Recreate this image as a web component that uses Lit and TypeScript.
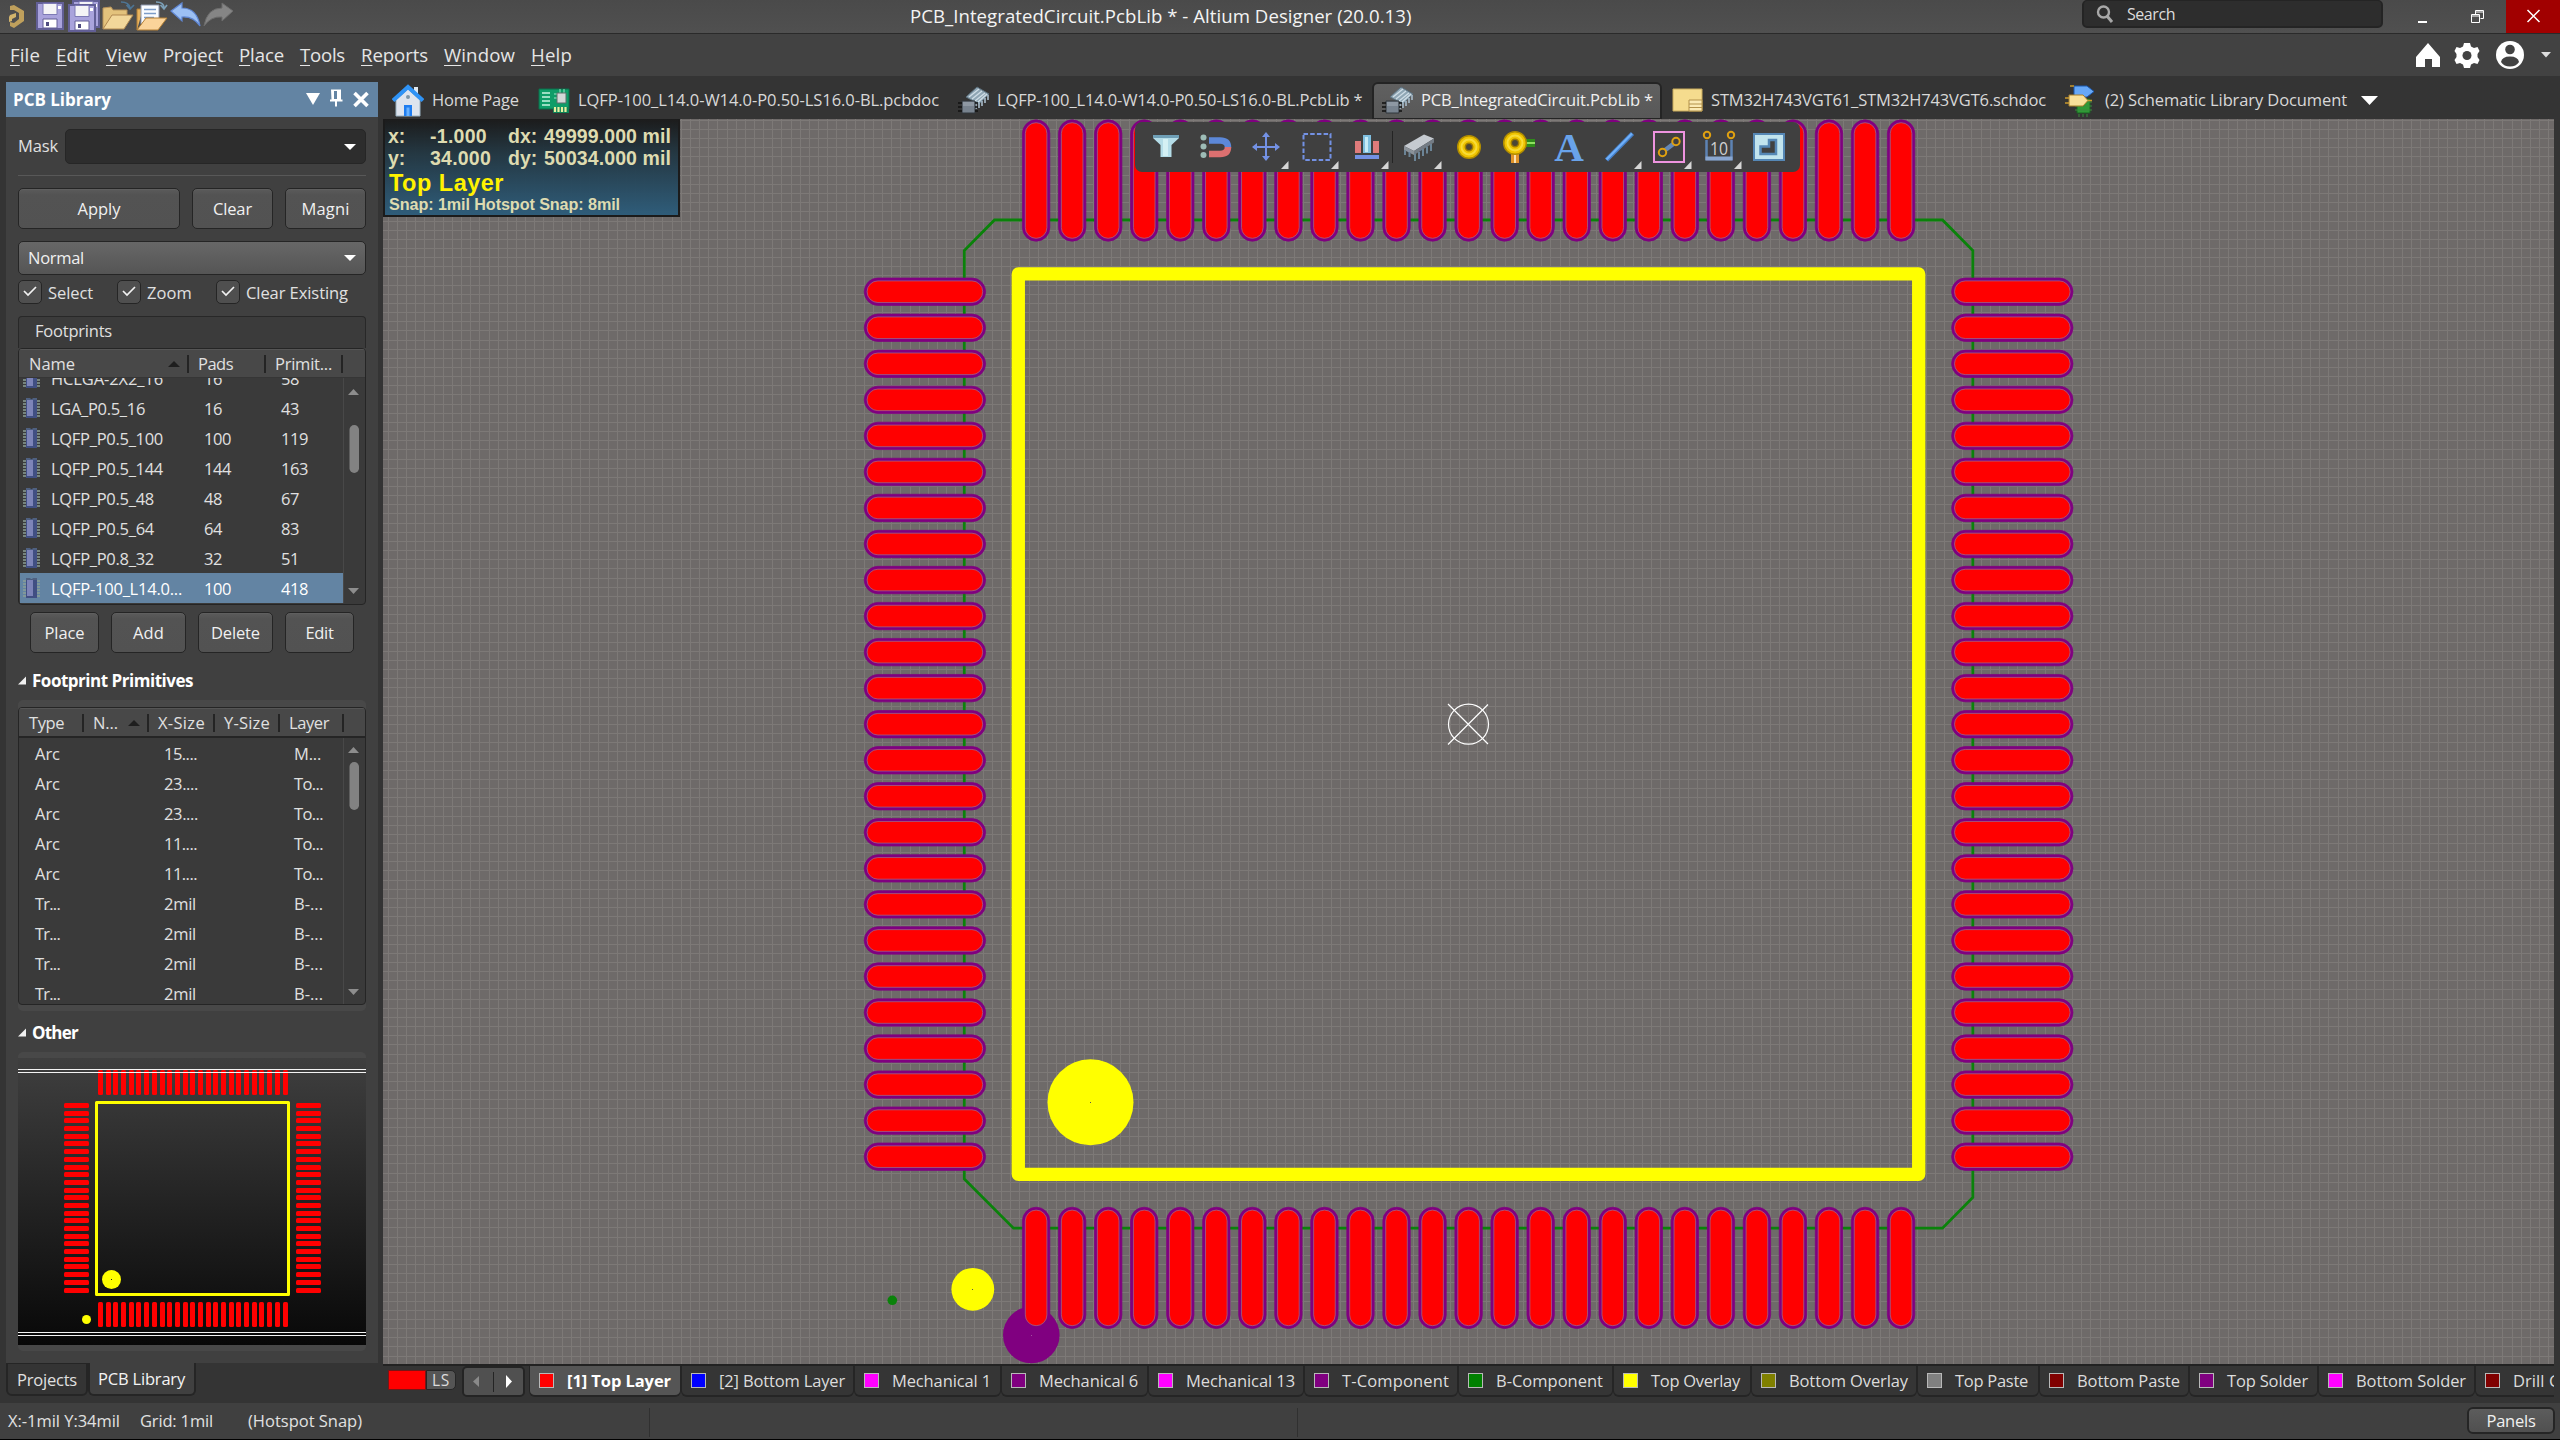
import { LitElement, html, svg, css, TemplateResult } from "lit";
import { customElement } from "lit/decorators.js";

/** A label whose tracking is tuned so that it spans the given width. */
const t = (text: string, w: number, cls = "") => html`<span class="t ${cls}" data-w=${w}>${text}</span>`;

const fitLabels = (root: ParentNode) => {
  root.querySelectorAll<HTMLElement>("[data-w]").forEach((el) => {
    el.style.letterSpacing = "0px";
    const n = (el.textContent ?? "").length;
    const want = Number(el.dataset.w);
    if (n > 1 && want) {
      const diff = (want - el.getBoundingClientRect().width) / n;
      el.style.letterSpacing = diff.toFixed(3) + "px";
    }
  });
};

const base = css`
  * { box-sizing: border-box; }
  .t { display: inline-block; white-space: pre; }
  svg { display: block; flex: none; }
`;

const N = 25;
const idx = Array.from({ length: N }, (_, i) => i);

/* ---------- title bar ---------- */
@customElement("title-bar")
class TitleBar extends LitElement {
  static styles = [base, css`
    :host { display: flex; height: 34px; background: linear-gradient(#4a4a4a, #505050); border-bottom: 1px solid #2a2a2a; color: #f4f4f4; }
    .quick { width: 910px; padding-left: 6px; }
    .title { font-size: 18.6px; line-height: 32px; flex: 1; }
    .search { width: 301px; height: 28px; margin-right: 0; background: #2d2d2d; border: 2px solid #242424; border-top-width: 1px; border-radius: 5px; display: flex; align-items: center; padding-left: 12px; gap: 13px; font-size: 16px; color: #dcdcdc; }
    .win { width: 123px; }
    .close { width: 54px; height: 33px; background: #a10000; }
  `];
  firstUpdated() { fitLabels(this.renderRoot); }
  render() {
    const floppy = (x: number, y: number) => svg`<g transform="translate(${x} ${y})">
      <path d="M1 1h26v26h-26z" fill="#a9a3dc" stroke="#625f96" stroke-width="2"/>
      <path d="M7 1.5h14v11h-14z" fill="#f4f4f6" stroke="#7d7ab5"/><path d="M22 4h3v3h-3z" fill="#fff"/>
      <path d="M7 17h14v9h-14z" fill="#fff" stroke="#625f96"/><path d="M10 20h3v4h-3z" fill="#4f4c80"/></g>`;
    return html`
      <div class="quick">
        <svg width="240" height="33" viewBox="6 0 240 33">
          <path d="M10 10V6l4-1 10 6v10l-10 7-4-2v-4l4 1 5-4v-6l-5-3z" fill="#bfa05c"/>
          <path d="M10 15l6-2v4l-4 2v2l-3 1v-5z" fill="#d2b46c"/>
          ${floppy(36, 2)}${floppy(72, 0)}${floppy(68, 4)}
          <path d="M103 29V8l8-1 2 3h14v6" fill="#e3c27c" stroke="#b8935a"/>
          <path d="M103 29l9-14h21l-9 14z" fill="#f2d79a" stroke="#b08850"/>
          <path d="M121 2q8 0 9 6M126.500 5l3.500 4 4-4" fill="none" stroke="#4d7595" stroke-width="1.700"/>
          <path d="M137 30V9h6" fill="#eab45e" stroke="#b37f34"/>
          <path d="M141 5h18v19h-18z" fill="#fafcff" stroke="#8d97ad"/>
          <path d="M144 9.500h12M144 13.500h12M144 17.500h10" stroke="#7c9cc8" stroke-width="1.300"/>
          <path d="M137 30l9-12h21l-9 12z" fill="#fbd49a" stroke="#b37f34"/>
          <path d="M156 2q8 0 8 6M160.500 5l3.500 4 3-4" fill="none" stroke="#7ca0b8" stroke-width="1.700"/>
          <path d="M171 11l11-8v5q15 0 18 18-7-10-18-9v4z" fill="#9cc0f4" stroke="#5f86d2" stroke-width="1.200"/>
          <path d="M233 11l-11-8v5q-15 0-18 18 7-10 18-9v4z" fill="#858585" stroke="#6c6c6c"/>
        </svg>
      </div>
      <div class="title">${t("PCB_IntegratedCircuit.PcbLib * - Altium Designer (20.0.13)", 501.5)}</div>
      <div class="search">
        <svg width="18" height="18"><circle cx="7.500" cy="7" r="5.500" fill="none" stroke="#a8a8a8" stroke-width="2.400"/><path d="M11 11l5 6" stroke="#a8a8a8" stroke-width="3"/></svg>
        ${t("Search", 48)}
      </div>
      <svg class="win" width="123" height="33"><path d="M35 22h9" stroke="#fff" stroke-width="2"/>
        <path d="M92.500 14.500v-4h8v8h-3M88.500 14.500h8v8h-8zM88.500 16h8M92.500 12h8" fill="none" stroke="#fff"/></svg>
      <svg class="close" width="54" height="33"><path d="M21.500 10l12 12M33.500 10l-12 12" stroke="#fff" stroke-width="1.500"/></svg>`;
  }
}

/* ---------- menu bar ---------- */
@customElement("menu-bar")
class MenuBar extends LitElement {
  static styles = [base, css`
    :host { display: flex; height: 42px; background: #424242; color: #e6e6e6; font-size: 18.6px; line-height: 42px; justify-content: space-between; }
    .items { display: flex; gap: 16px; padding-left: 10px; }
    .item { width: var(--w); }
    u { text-decoration-thickness: 1px; text-underline-offset: 3px; }
  `];
  firstUpdated() { fitLabels(this.renderRoot); }
  render() {
    const items: [string, string, string, number][] = [["", "F", "ile", 30], ["", "E", "dit", 34], ["", "V", "iew", 41], ["Proje", "c", "t", 60], ["", "P", "lace", 45], ["", "T", "ools", 45], ["", "R", "eports", 67], ["", "W", "indow", 71], ["", "H", "elp", 41]];
    return html`<div class="items">${items.map(([a, u, b, w]) => html`<div class="item" style="--w:${w}px"><span class="t" data-w=${w}>${a}<u>${u}</u>${b}</span></div>`)}</div>
      <svg width="160" height="42" viewBox="2400 34 160 42">
        <path d="M2428 43l12 14v10h-8v-8h-7v8h-9V57z" fill="#fff"/>
        <path d="M2464 43h6l1 3.500 3 1.500 3.500-1 2 4-2 3v3l2 3-2 4-3.500-1-3 1.500-1 3.500h-6l-1-3.500-3-1.500-3.500 1-2-4 2-3v-3l-2-3 2-4 3.500 1 3-1.500z" fill="#fff"/><circle cx="2467" cy="55.500" r="4.500" fill="#424242"/>
        <circle cx="2510" cy="55" r="14" fill="#fff"/><circle cx="2510" cy="49.500" r="4.800" fill="#424242"/><path d="M2501 62q1-5.500 9-5.500t9 5.500q-3 4.500-9 4.500t-9-4.500z" fill="#424242"/>
        <path d="M2541 52h10l-5 5.500z" fill="#ddd"/>
      </svg>`;
  }
}

/* ---------- library panel ---------- */
@customElement("pcb-library-panel")
class PcbLibraryPanel extends LitElement {
  static styles = [base, css`
    :host { display: flex; flex-direction: column; width: 372px; height: 1281px; background: #404040; color: #e0e0e0; font-size: 16.5px; }
    .head { height: 35px; background: #6384a3; display: flex; justify-content: space-between; padding: 0 9px 0 7px; line-height: 35px; font-weight: 700; font-size: 17px; color: #fff; }
    .body { display: flex; flex-direction: column; padding: 12px 12px 0; }
    .mask { display: flex; height: 35px; align-items: center; justify-content: space-between; }
    .mask .t { margin-top: -3px; }
    .input { width: 301px; height: 35px; border: 1.500px solid #262626; border-radius: 5px; background: #2d2d2d; display: flex; justify-content: flex-end; align-items: center; padding-right: 8px; }
    .rule { height: 1px; background: #585858; margin: 11px 0 12px; }
    .btns { display: flex; gap: 12px; }
    .btn { height: 41px; line-height: 39px; border: 1.500px solid #252525; border-radius: 5px; background: linear-gradient(#5b5b5b, #535353 15%, #525252); box-shadow: inset 0 1px #5f5f5f; text-align: center; color: #f0f0f0; width: var(--w); }
    .select { height: 34px; margin-top: 12px; border: 1.500px solid #252525; border-radius: 5px; background: linear-gradient(#676767, #555); display: flex; align-items: center; justify-content: space-between; padding: 0 8px 1px 9px; color: #f0f0f0; }
    .checks { display: flex; height: 24px; margin-top: 5px; }
    .check { width: 99px; display: flex; align-items: center; gap: 6px; white-space: nowrap; }
    .box { width: 24px; height: 24px; border: 1.500px solid #252525; border-radius: 5px; background: #4f4f4f; flex: none; }
    .cap { height: 32px; margin-top: 12px; border: 1px solid #282828; border-bottom: 0; border-radius: 4px 4px 0 0; background: #3b3b3b; line-height: 28px; padding-left: 16px; }
    .table { border: 1px solid #252525; border-radius: 4px; background: #3a3a3a; overflow: hidden; display: flex; flex-direction: column; }
    .foot { height: 257px; }
    .thead { height: 29px; background: #484848; display: flex; border-bottom: 1px solid #363636; border-top: 1px solid #555; padding-left: 1px; flex: none; line-height: 28px; }
    .prim .thead { height: 30px; border-bottom: 2px solid #252525; }
    .th { width: var(--w); padding-left: 9px; display: flex; justify-content: space-between; align-items: center; background: linear-gradient(#242424, #242424) right 5px / 2px 18px no-repeat; padding-right: 9px; }
    .tbody { display: flex; flex: 1; overflow: hidden; }
    .rows { width: 325px; border-right: 1px solid #484848; padding-left: 1px; }
    .rows.clip { margin-top: -15px; }
    .clipbox { overflow: hidden; }
    .row { height: 30px; display: flex; align-items: center; }
    .row.sel { background: #6384a3; color: #fff; }
    .c1 { width: 31px; padding-left: 2px; } .c2 { width: 153px; } .c3 { width: 77px; }
    .p0 { width: 144px; padding-left: 15px; } .p1 { width: 130px; }
    .prim .row { padding-top: 1px; }
    .ops { padding: 7px 12px 0; }
    .sect { display: flex; align-items: center; gap: 6px; height: 24px; font-weight: 700; color: #fff; font-size: 17px; margin-top: 9px; }
    .sect.first { margin-top: 15px; }
    .shell { background: #484848; border-radius: 5px; }
    .prim { height: 311px; padding: 7px 0 6px; margin-top: 8px; }
    .prim .table { height: 298px; }
    .preview { height: 299px; margin-top: 8px; padding: 6px 0; }
  `];
  firstUpdated() { fitLabels(this.renderRoot); }
  render() {
    const arrow = html`<svg width="14" height="8"><path d="M1 1h12l-6 6z" fill="#fff"/></svg>`;
    const sort = html`<svg width="12" height="6"><path d="M0 6h12l-6-6z" fill="#1e1e1e"/></svg>`;
    const chip = html`<svg width="20" height="20"><path d="M1 3h3M1 6h3M1 9h3M1 12h3M1 15h3M1 18h3M15 3h3M15 6h3M15 9h3M15 12h3M15 15h3M15 18h3" stroke="#8c9e96" stroke-width="1.500"/><rect x="4" y="1" width="11" height="19" fill="#414f83"/><rect x="5" y="2" width="6" height="16" fill="#7d84b8"/><path d="M4 0h4l1.500 1.500L11 0h4v2H4z" fill="#4f6080"/></svg>`;
    const check = (label: string, w: number) => html`<div class="check"><span class="box"><svg width="21" height="21"><path d="M5 10l4 4 8-8" fill="none" stroke="#f2f2f2" stroke-width="1.700"/></svg></span>${t(label, w)}</div>`;
    const btn = (label: string, w: number, tw: number) => html`<div class="btn" style="--w:${w}px">${t(label, tw)}</div>`;
    const th = (label: string, w: number, tw: number, s = false) => html`<div class="th" style="--w:${w}px">${t(label, tw)}${s ? sort : ""}</div>`;
    const scroll = (h: number, a: number, y: number, b: number) => html`<svg width="20" height=${h}><path d="M4 ${a + 6}h11l-5.500-6z" fill="#8d8d8d"/><rect x="5.500" y=${y} width="9.500" height="48" rx="4.700" fill="#828282"/><path d="M4 ${b}h11l-5.500 6z" fill="#8d8d8d"/></svg>`;
    const fp: [string, number, string, string][] = [["HCLGA-2X2_16", 112, "16", "58"], ["LGA_P0.5_16", 94, "16", "43"], ["LQFP_P0.5_100", 112, "100", "119"], ["LQFP_P0.5_144", 112, "144", "163"], ["LQFP_P0.5_48", 103, "48", "67"], ["LQFP_P0.5_64", 103, "64", "83"], ["LQFP_P0.8_32", 103, "32", "51"], ["LQFP-100_L14.0...", 131, "100", "418"]];
    const prims: [string, string, number, string, number][] = [["Arc", "15....", 33, "M...", 27], ["Arc", "23....", 34, "To...", 29], ["Arc", "23....", 34, "To...", 29], ["Arc", "11....", 33, "To...", 29], ["Arc", "11....", 33, "To...", 29], ...Array.from({ length: 4 }, () => ["Tr...", "2mil", 32, "B-...", 29] as [string, string, number, string, number])];
    const mark = html`<svg width="8" height="9"><path d="M0 8.500h8v-8z" fill="#f0f0f0"/></svg>`;
    return html`
      <div class="head">${t("PCB Library", 98)}
        <svg width="66" height="35" viewBox="303 82 66 35"><path d="M306 93h14l-7 12z" fill="#fff"/>
          <path d="M331 89.500h10v10h1.500v2h-5.500v5h-2v-5h-5v-2h1.500z" fill="#fff"/><path d="M334 91h3v8h-3z" fill="#6384a3"/>
          <path d="M354.500 93l13 13M367.500 93l-13 13" stroke="#fff" stroke-width="3.600"/></svg>
      </div>
      <div class="body">
        <div class="mask">${t("Mask", 40)}<div class="input">${arrow}</div></div>
        <div class="rule"></div>
        <div class="btns">${btn("Apply", 162, 43)}${btn("Clear", 81, 39)}${btn("Magni", 81, 48)}</div>
        <div class="select">${t("Normal", 56)}${arrow}</div>
        <div class="checks">${check("Select", 45)}${check("Zoom", 45)}${check("Clear Existing", 102)}</div>
        <div class="cap">${t("Footprints", 77)}</div>
        <div class="table foot">
          <div class="thead">${th("Name", 169, 46, true)}${th("Pads", 77, 35)}${th("Primit...", 77, 57)}</div>
          <div class="tbody">
            <div class="clipbox"><div class="rows clip">${fp.map(([n, w, p, q], i) => html`<div class="row ${i === 7 ? "sel" : ""}"><div class="c1">${chip}</div><div class="c2">${t(n, w)}</div><div class="c3">${t(p, p.length * 9)}</div>${t(q, q.length * 9)}</div>`)}</div></div>
            ${scroll(226, 11, 47, 210)}
          </div>
        </div>
        <div class="btns ops">${btn("Place", 69, 40)}${btn("Add", 75, 31)}${btn("Delete", 75, 49)}${btn("Edit", 69, 28)}</div>
        <div class="sect first">${mark}${t("Footprint Primitives", 161)}</div>
        <div class="shell prim"><div class="table">
          <div class="thead">${th("Type", 64, 35)}${th("N...", 65, 25, true)}${th("X-Size", 66, 47)}${th("Y-Size", 65, 46)}${th("Layer", 64, 40)}</div>
          <div class="tbody">
            <div class="rows">${prims.map(([a, b, bw, c, cw]) => html`<div class="row"><div class="p0">${t(a, 25)}</div><div class="p1">${t(b, bw)}</div>${t(c, cw)}</div>`)}</div>
            ${scroll(266, 9, 24, 251)}
          </div>
        </div></div>
        <div class="sect">${mark}${t("Other", 46)}</div>
        <div class="shell preview">${this.preview()}</div>
      </div>`;
  }
  private preview(): TemplateResult {
    const p = 7.69;
    return html`<svg width="348" height="287" viewBox="18 1058 348 287">
      <defs><linearGradient id="g" x2="0" y2="1"><stop offset="0" stop-color="#3f3f3f"/><stop offset="1" stop-color="#080808"/></linearGradient></defs>
      <rect x="18" y="1058" width="348" height="287" fill="url(#g)"/>
      ${idx.map((i) => svg`<rect x=${Math.round(98 + i * p)} y="1070" width="5" height="25" rx="1.500" fill="#f00"/><rect x=${Math.round(98 + i * p)} y="1302" width="5" height="25" rx="1.500" fill="#f00"/>
        <rect x="64" y=${Math.round(1103 + i * p)} width="25" height="5" rx="1.500" fill="#f00"/><rect x="296" y=${Math.round(1103 + i * p)} width="25" height="5" rx="1.500" fill="#f00"/>`)}
      <rect x="96.500" y="1102.500" width="192" height="192" fill="none" stroke="#ff0" stroke-width="3" stroke-linejoin="round"/>
      <circle cx="111.500" cy="1279.500" r="9.500" fill="#ff0"/><rect x="111" y="1279" width="1" height="1" fill="#222"/><circle cx="86.500" cy="1319.500" r="4.500" fill="#ff0"/>
      <path d="M18 1069.500h348M18 1072.500h348M18 1332.500h348M18 1335.500h348" stroke="#f4f4f4"/>
    </svg>`;
  }
}

/* ---------- document tabs ---------- */
@customElement("document-tabs")
class DocumentTabs extends LitElement {
  static styles = [base, css`
    :host { display: flex; height: 43px; padding-top: 6px; color: #d8d8d8; font-size: 16.5px; line-height: 36px; }
    .tab { display: flex; gap: 8px; width: var(--w); height: 37px; padding-left: 9px; white-space: nowrap; align-items: center; }
    .tab .t { margin-top: -2px; }
    .on { background: linear-gradient(#606060, #585858); border: 2px solid #242424; border-bottom-width: 1px; border-radius: 6px 6px 0 0; padding-left: 7px; color: #f0f0f0; height: 37px; }
    .tab.on .t { margin-top: -3px; }
  `];
  firstUpdated() { fitLabels(this.renderRoot); }
  render() {
    const home = svg`<path d="M22 3h4v9h-4z" fill="#dfe8f0"/><path d="M4 16L16 5l12 11v16H4z" fill="#dde4ee" stroke="#9ab2c2"/><path d="M1 16.500L16 3l15 13.500" fill="none" stroke="#2f93f6" stroke-width="4"/><path d="M12 21h8v11h-8z" fill="#1f7df0"/><path d="M14.500 23.500h3V32h-3z" fill="#69b2ff"/><circle cx="16" cy="13" r="2" fill="#7d96a8"/>`;
    const board = svg`<path d="M1 5h30v20H1z" fill="#0f9d68" stroke="#0a6e4a"/><path d="M4 9h8M4 13h8M4 17h8M4 21h8" stroke="#c8f4df" stroke-width="1.600"/><path d="M16 10h3M16 14h3M22 5v4M26 5v4" stroke="#9fe8c8"/><path d="M19 9h9v10h-9z" fill="#d4d8d8" stroke="#5c6f6a"/><path d="M15 23h16v6H15z" fill="#0d8357"/><path d="M17 23v5M20.500 23v5M24 23v5M27.500 23v5" stroke="#e8f0a0" stroke-width="2.200"/>`;
    const lib = svg`<path d="M9 13L20 3l12 7-10 10z" fill="#8fa6b4" stroke="#5b6e7b"/><path d="M12 13L22 5M15 15L25 7M18 17L28 9M21 18l9-8" stroke="#cfdde6" stroke-width="1.300"/><path d="M19 19v6M22 19v5M25 17v5M28 14v5M31 11v5" stroke="#a9bccb" stroke-width="1.600"/><path d="M5 17h13v12H5z" fill="#78838f" stroke="#30363c"/><path d="M6 18h11v4H6z" fill="#8e98a3"/><path d="M1 19h4M1 23h4M1 27h4M18 19h3M18 23h3M18 27h3" stroke="#111" stroke-width="1.500"/>`;
    const sch = svg`<path d="M2 5h29v22H2z" fill="#f5dc8e" stroke="#c9ab5c"/><path d="M18 16h13v11H18zM18 20h13M18 23.500h13" fill="#fbeab4" stroke="#b3924a"/>`;
    const slib = svg`<path d="M12 15h13v14H12z" fill="#2f9a36" stroke="#186420"/><path d="M10 18h17M10 22h17M10 26h17M14 30v3M18 30v3M22 30v3" stroke="#3a8a3e"/><path d="M9 2h13l7 5.500-7 5.500H9z" fill="#67a8f7" stroke="#1b58ae"/><path d="M4 11h14l5 5.500-5 5.500H4z" fill="#f8e19a" stroke="#a77f28"/><path d="M0 14h4M0 19h4M23 16.500h4M5 2h4" stroke="#c8982c" stroke-width="1.500"/>`;
    const tabs: [unknown, string, number, number, boolean][] = [[home, "Home Page", 87, 146, false], [board, "LQFP-100_L14.0-W14.0-P0.50-LS16.0-BL.pcbdoc", 361, 419, false], [lib, "LQFP-100_L14.0-W14.0-P0.50-LS16.0-BL.PcbLib *", 365.5, 424, false], [lib, "PCB_IntegratedCircuit.PcbLib *", 232, 290, true], [sch, "STM32H743VGT61_STM32H743VGT6.schdoc", 335, 394, false], [slib, "(2) Schematic Library Document", 242, 300, false]];
    return html`${tabs.map(([ic, s, tw, w, on]) => html`<div class="tab ${on ? "on" : ""}" style="--w:${w}px"><svg width="32" height="34">${ic}</svg>${t(s, tw)}</div>`)}
      <svg width="24" height="37"><path d="M5 14h17l-8.500 9z" fill="#fff"/></svg>`;
  }
}

/* ---------- editor canvas ---------- */
@customElement("pcb-canvas")
class PcbCanvas extends LitElement {
  static styles = [base, css`
    :host { display: block; position: relative; width: 2171px; height: 1245px; overflow: hidden; background: #6e6a69; }
    .hud { position: absolute; left: 0; top: 0; width: 297px; height: 98px; border: 2px solid #1b1b1b; border-top: 0; background: linear-gradient(#181818f5, #213540f5 35%, #2d5c7af8); font-family: "Liberation Sans", sans-serif; font-weight: 700; color: #dedbb0; padding: 6px 0 0 3px; font-size: 19.500px; }
    .line { display: grid; grid-template-columns: 42px 78px 36px auto; height: 22px; line-height: 22px; justify-items: start; }
    .layer { color: #fff200; font-size: 23.500px; line-height: 26px; height: 26px; margin-top: 1px; margin-left: 1px; }
    .snap { font-size: 16.200px; line-height: 16px; margin-left: 1px; }
    .bar { position: absolute; left: 752px; top: 3px; width: 665px; height: 50px; border-radius: 7px; background: #404040; display: flex; padding-left: 6px; }
    .gap { width: 3px; background: linear-gradient(#242424, #242424) 1px 9px / 1px 32px no-repeat; }
    .a { font-family: "Liberation Serif", serif; font-weight: 700; font-size: 41px; }
    .ten { font-size: 19px; }
  `];
  firstUpdated() { fitLabels(this.renderRoot); }
  private grid() {
    const s = 9.154;
    let v = "", h = "";
    for (let k = -119; k <= 119; k++) { const x = Math.round(1468 + k * s); v += `M${x}.5 119V1364`; }
    for (let k = -67; k <= 70; k++) { const y = Math.round(724 + k * s); h += `M383 ${y}.5H2554`; }
    return svg`<path d=${v + h} stroke="#7d7977" fill="none"/>`;
  }
  private pad(cx: number, cy: number, vert: boolean) {
    const r = (w: number, l: number, f: string, st: string) => { const a = vert ? w : l, b = vert ? l : w; return svg`<rect x=${cx - a / 2} y=${cy - b / 2} width=${a} height=${b} rx=${w / 2} fill=${f} stroke=${st} stroke-width="0.700"/>`; };
    return svg`${r(27.400, 121.400, "#800080", "#800080")}${r(21.600, 115.600, "#f00", "#9a6f90")}`;
  }
  private tools() {
    const ring = (x: number, y: number) => svg`<circle cx=${x} cy=${y} r="11.300" fill="#efc400" stroke="#b08c00" stroke-width="1.500"/><circle cx=${x} cy=${y} r="7.500" fill="none" stroke="#f8dc38" stroke-width="2"/><circle cx=${x} cy=${y} r="3.700" fill="#4c4636" stroke="#a07c00" stroke-width="1.500"/>`;
    const icons: [unknown, boolean][] = [
      [svg`<path d="M12 13h26v3l-7.500 7v12h-11V23L12 16z" fill="#b5dde8"/><path d="M12 13h26v3H12z" fill="#6f9fb6"/><path d="M22 17h5v17h-5z" fill="#d4f0f4"/>`, false],
      [svg`<circle cx="12.500" cy="15.500" r="3" fill="#9dbcb6"/><circle cx="12.500" cy="24.500" r="3" fill="#9dbcb6"/><circle cx="12.500" cy="33" r="3" fill="#9dbcb6"/><path d="M18 18.500h11q8 0 8 7" fill="none" stroke="#5c88d8" stroke-width="6.500"/><path d="M37 25q0 7-8 7H18" fill="none" stroke="#dd7070" stroke-width="6.500"/>`, false],
      [svg`<path d="M25 12v26M12 25h26" stroke="#7391e4" stroke-width="2"/><path d="M25 10l4 5h-8zM25 39l4-5h-8zM11 25l5-4v8zM39 25l-5-4v8z" fill="#7391e4"/>`, true],
      [svg`<rect x="12.500" y="12" width="27" height="26" fill="none" stroke="#7391e4" stroke-width="2" stroke-dasharray="4.500 2.200"/>`, true],
      [svg`<path d="M14 19h6v12h-6zM32 19h6v12h-6z" fill="#df7b7b"/><path d="M22 13h8v18h-8z" fill="#7fbfe0"/><path d="M24 15h3v15h-3z" fill="#c5eaf6"/><path d="M14 33h24v4H14z" fill="#7391e4"/>`, true],
      [svg`<path d="M10 24L30 12.500l10 4L20 29z" fill="#c5cad0"/><path d="M10 24l10 5v4l-10-5z" fill="#8b9299"/><path d="M20 29l20-12.500v4L20 33z" fill="#737b84"/><path d="M11 28v5M15.500 30v5M21 32v7M25 30v7M29 27v7M33 24.500v7M37 22v7" stroke="#6c8496" stroke-width="2"/>`, true],
      [ring(25, 25), false],
      [svg`<path d="M17 31h8v10h-8z" fill="#e0942a"/><path d="M20 31h2v10h-2z" fill="#fbe0b0"/><path d="M31 17h10v8H31z" fill="#2f8a1a"/><path d="M31 20h10v2H31z" fill="#8fe060"/>${ring(21, 21)}`, false],
      [svg`<text class="a" x="25" y="39" text-anchor="middle" fill="#69a3ea">A</text>`, false],
      [svg`<path d="M12.500 38L38.500 11.500" stroke="#467fc8" stroke-width="4.500"/><path d="M12.500 37.500L38 11.500" stroke="#6fb0fa" stroke-width="2.200"/>`, true],
      [svg`<rect x="10" y="10" width="30" height="30" fill="none" stroke="#ee94e0" stroke-width="2"/><path d="M20 29L30.500 21" stroke="#6488b8" stroke-width="4.500"/><circle cx="18.500" cy="30.500" r="3.700" fill="#404040" stroke="#dfa010" stroke-width="2"/><circle cx="32" cy="19.500" r="3.700" fill="#404040" stroke="#dfa010" stroke-width="2"/>`, true],
      [svg`<path d="M12.500 18v19h25V18" fill="none" stroke="#5d83b4" stroke-width="2.500"/><path d="M11.500 36.500h27" stroke="#8aa6cf" stroke-width="4"/><circle cx="13" cy="13" r="3.200" fill="none" stroke="#dfa010" stroke-width="2"/><circle cx="37" cy="13" r="3.200" fill="none" stroke="#dfa010" stroke-width="2"/><text class="ten" x="25" y="33" text-anchor="middle" fill="#d0d0d0" textLength="18" lengthAdjust="spacingAndGlyphs">10</text>`, true],
      [svg`<rect x="10" y="12" width="30" height="26" fill="#c2e4ee" stroke="#5587b5" stroke-width="2"/><path d="M25 18h7v14h-15.500v-7.500H25z" fill="#404040" stroke="#5587b5" stroke-width="2.500"/>`, false],
    ];
    return icons.map(([g, m], i) => html`${i === 5 ? html`<div class="gap"></div>` : ""}<svg width="50" height="50">${g}${m ? svg`<path d="M40 47h7.500v-8z" fill="#d6d6d6"/>` : ""}</svg>`);
  }
  render() {
    const C = 1468.6, D = 724.2, P = 36.04, R = 543.7;
    return html`<svg width="2171" height="1245" viewBox="383 119 2171 1245">
        ${this.grid()}
        <circle cx="1031.300" cy="1335" r="28.300" fill="#800080"/><rect x="1031" y="1335" width="1" height="1" fill="#a050a0"/>
        <path d="M994.500 220H1942.500L1972.800 250.500V1197.500L1942.500 1228.200H1013.500L964.300 1179V250.500Z" fill="none" stroke="#0a820a" stroke-width="2.800"/>
        ${idx.map((i) => { const o = (i - 12) * P; return svg`${this.pad(C + o, D - R, true)}${this.pad(C + o, D + R, true)}${this.pad(C - R, D + o, false)}${this.pad(C + R, D + o, false)}`; })}
        <rect x="1018.300" y="273.900" width="900.400" height="900.400" fill="none" stroke="#ff0" stroke-width="13.300" stroke-linejoin="round"/>
        <circle cx="1090.500" cy="1102.300" r="43" fill="#ff0"/><rect x="1090" y="1102" width="1" height="1" fill="#555"/>
        <circle cx="972.800" cy="1289.300" r="21.400" fill="#ff0"/><rect x="972" y="1289" width="1" height="1" fill="#555"/>
        <circle cx="892.300" cy="1300.300" r="4.800" fill="#0a820a"/>
        <g stroke="#fff" stroke-width="1.200" fill="none"><circle cx="1468.500" cy="724.200" r="20"/><path d="M1448 704L1488 744M1488 704.500L1448 744.500"/></g>
      </svg>
      <div class="hud">
        <div class="line"><span>x:</span>${t("-1.000", 57)}<span>dx:</span>${t("49999.000 mil", 127)}</div>
        <div class="line"><span>y:</span>${t("34.000", 61)}<span>dy:</span>${t("50034.000 mil", 127)}</div>
        <div class="layer">${t("Top Layer", 115)}</div>
        <div class="snap">${t("Snap: 1mil Hotspot Snap: 8mil", 231)}</div>
      </div>
      <div class="bar">${this.tools()}</div>`;
  }
}

/* ---------- layer tabs ---------- */
@customElement("layer-tabs")
class LayerTabs extends LitElement {
  static styles = [base, css`
    :host { display: flex; width: 2171px; height: 33px; border-top: 2px solid #222; overflow: hidden; color: #dcdcdc; font-size: 16.5px; line-height: 28px; }
    .red { width: 38px; height: 20px; margin: 4px 0 0 5px; background: #f00; border: 1px solid #7a1515; flex: none; }
    .ls { width: 30px; height: 20px; margin-top: 4px; background: #555; border: 1px solid #262626; border-radius: 0 5px 5px 0; line-height: 19px; padding-left: 5px; font-size: 15.500px; flex: none; }
    .nav { margin: 0 4px 0 6px; width: 63px; height: 31px; border: 2px solid #242424; border-radius: 5px; background: #505050; flex: none; }
    .tab { flex: none; width: var(--w); height: 31px; border: 2px solid #252525; border-top: 0; border-left-width: 1px; border-right-width: 1px; border-radius: 0 0 6px 6px; background: #353535; display: flex; gap: 13px; padding-left: 9px; align-items: center; white-space: nowrap; }
    .on { background: #555; font-weight: 700; color: #fff; }
    .sw { width: 15px; height: 15px; border: 1px solid #b8b8b8; background: var(--c); flex: none; }
  `];
  firstUpdated() { fitLabels(this.renderRoot); }
  render() {
    const L: [string, string, number, number][] = [["[1] Top Layer", "#f00", 104, 152], ["[2] Bottom Layer", "#00f", 126, 173], ["Mechanical 1", "#f0f", 99, 147], ["Mechanical 6", "#800080", 99, 147], ["Mechanical 13", "#f0f", 109, 156], ["T-Component", "#800080", 107, 154], ["B-Component", "#008000", 107, 155], ["Top Overlay", "#ff0", 89, 138], ["Bottom Overlay", "#808000", 119, 166], ["Top Paste", "#808080", 73, 122], ["Bottom Paste", "#800000", 103, 150], ["Top Solder", "#800080", 81, 129], ["Bottom Solder", "#f0f", 110, 157], ["Drill Guide", "#800000", 82, 130]];
    return html`<div class="red"></div><div class="ls">${t("LS", 18)}</div>
      <svg class="nav" width="59" height="27"><path d="M15 8l-6 5.500 6 5.500z" fill="#8a8a8a"/><path d="M29.500 4v20" stroke="#242424"/><path d="M42 7l6 6.500-6 6.500z" fill="#fff"/></svg>
      ${L.map(([n, c, tw, w], i) => html`<div class="tab ${i === 0 ? "on" : ""}" style="--w:${w}px"><span class="sw" style="--c:${c}"></span>${t(n, tw)}</div>`)}`;
  }
}

/* ---------- application ---------- */
@customElement("app-root")
class AppRoot extends LitElement {
  static styles = [base, css`
    :host { display: block; width: 2560px; height: 1440px; background: #343434; font-family: "Open Sans", "Noto Sans", sans-serif; overflow: hidden; color: #e0e0e0; font-size: 16.5px; }
    .main { display: flex; height: 1327px; gap: 5px; padding-left: 6px; }
    .side { display: flex; flex-direction: column; padding-top: 6px; width: 372px; }
    .stabs { display: flex; height: 33px; line-height: 31px; }
    .stab { width: var(--w); border: 2px solid #252525; border-top-width: 1px; border-radius: 0 0 6px 6px; padding-left: 9px; }
    .on { background: #404040; color: #f4f4f4; border-top: 0; padding-left: 8px; line-height: 32px; }
    .status { height: 37px; background: #404040; border-bottom: 1px solid #000; display: flex; line-height: 36px; }
    .s1 { width: 140px; padding-left: 8px; }
    .s2 { width: 108px; }
    .s3 { width: 401px; }
    .tick { width: 1px; height: 29px; margin: 5px 0; background: #303030; }
    .cell { width: 648px; height: 29px; margin: 5px 0; border-right: 1px solid #303030; }
    .fill { flex: 1; }
    .panels { width: 88px; height: 27px; margin: 4px 5px 0 0; border: 2px solid #252525; border-radius: 6px; background: linear-gradient(#5c5c5c, #505050); line-height: 23px; text-align: center; color: #f0f0f0; }
  `];
  firstUpdated() { fitLabels(this.renderRoot); }
  render() {
    return html`<title-bar></title-bar><menu-bar></menu-bar>
      <div class="main">
        <div class="side"><pcb-library-panel></pcb-library-panel>
          <div class="stabs"><div class="stab" style="--w:82px">${t("Projects", 60)}</div><div class="stab on" style="--w:108px">${t("PCB Library", 87)}</div></div>
        </div>
        <div><document-tabs></document-tabs><pcb-canvas></pcb-canvas><layer-tabs></layer-tabs></div>
      </div>
      <div class="status">
        <div class="s1">${t("X:-1mil Y:34mil", 112)}</div><div class="s2">${t("Grid: 1mil", 73)}</div><div class="s3">${t("(Hotspot Snap)", 114)}</div>
        <div class="tick"></div><div class="cell"></div><div class="fill"></div><div class="panels">${t("Panels", 49)}</div>
      </div>`;
  }
}
